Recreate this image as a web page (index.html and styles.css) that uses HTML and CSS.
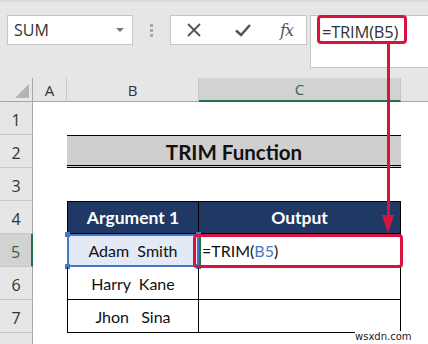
FILE: index.html
```html
<!DOCTYPE html>
<html>
<head>
<meta charset="utf-8">
<link rel="stylesheet" href="styles.css">
</head>
<body>
<div class="app">
  <div class="toolbar">
    <div class="namebox"><span>SUM</span><span class="caret"></span></div>
    <div class="dots"><i></i><i></i><i></i></div>
    <div class="fbtns">
      <svg class="ic-x" width="16" height="16" viewBox="0 0 16 16"><path d="M2 2L14 14M14 2L2 14" stroke="#555" stroke-width="1.8" fill="none"/></svg>
      <svg class="ic-ok" width="18" height="16" viewBox="0 0 18 16"><path d="M2 8.5L7 13L16 3" stroke="#555" stroke-width="2.6" fill="none"/></svg>
      <span class="fx">fx</span>
    </div>
    <div class="fbar"><span class="ftext">=TRIM(B5)</span></div>
  </div>
  <div class="sheet">
    <div class="corner"><span class="tri"></span></div>
    <div class="ch">A</div>
    <div class="ch">B</div>
    <div class="ch sel">C</div>
    <div class="ch rest"></div>

    <div class="rh">1</div><div class="c"></div><div class="c"></div><div class="c"></div><div class="c"></div>
    <div class="rh">2</div><div class="c"></div><div class="title">TRIM Function</div><div class="c"></div>
    <div class="rh">3</div><div class="c"></div><div class="c"></div><div class="c"></div><div class="c"></div>
    <div class="rh">4</div><div class="c"></div><div class="th tb">Argument 1</div><div class="th tc">Output</div><div class="c"></div>
    <div class="rh rsel">5</div><div class="c"></div><div class="td tb bsel">Adam&nbsp; Smith<i class="h h1"></i><i class="h h2"></i><i class="h h3"></i><i class="h h4"></i></div><div class="td tc active">=TRIM(<span class="ref">B5</span>)</div><div class="c"></div>
    <div class="rh">6</div><div class="c"></div><div class="td tb">Harry&nbsp; Kane</div><div class="td tc"></div><div class="c"></div>
    <div class="rh">7</div><div class="c"></div><div class="td tb">Jhon&nbsp;&nbsp; Sina</div><div class="td tc"></div><div class="c"></div>
    <div class="rh last"></div><div class="c"></div><div class="c"></div><div class="c"></div><div class="c"></div>
  </div>
  <div class="redbox top"></div>
  <div class="redbox cell"></div>
  <div class="arrow"><span class="shaft"></span><span class="head"></span></div>
  <div class="wm">wsxdn.com</div>
</div>
</body>
</html>
```
FILE: styles.css
```css
* { box-sizing: border-box; }
html, body { margin: 0; padding: 0; }
body { width: 428px; height: 344px; overflow: hidden; background: #fff; font-family: "Open Sans", "Noto Sans", sans-serif; }
.app { position: relative; width: 428px; height: 344px; background: #e6e6e6; }

.toolbar { display: flex; align-items: flex-start; height: 78px; padding-top: 13px; border-top: 2px solid #dadada; }
.namebox { margin-left: 7px; width: 126px; height: 30px; background: #fff; border: 1px solid #c6c6c6; display: flex; align-items: center; justify-content: space-between; padding: 0 8px 0 6px; font-size: 16px; color: #333; }
.caret { width: 0; height: 0; border-left: 4px solid transparent; border-right: 4px solid transparent; border-top: 4px solid #777; }
.dots { width: 37px; height: 30px; display: flex; flex-direction: column; align-items: center; justify-content: center; gap: 2px; }
.dots i { display: block; width: 3px; height: 3px; background: #a8a8a8; }
.fbtns { width: 137px; height: 30px; background: #fff; border: 1px solid #c6c6c6; display: flex; align-items: center; padding-left: 15px; }
.ic-x { margin-right: 32px; }
.ic-ok { margin-right: 28px; }
.fx { font-family: "DejaVu Serif", "Liberation Serif", serif; font-style: italic; font-size: 16px; color: #555; letter-spacing: -1px; }
.fbar { margin-left: 3px; flex: 1; height: 53px; background: #fff; border: 1px solid #c6c6c6; border-right: none; padding: 4px 0 0 11px; }
.ftext { font-size: 16.5px; color: #333; letter-spacing: -0.2px; }

.sheet { display: grid; grid-template-columns: 33px 34px 132px 202px 27px; grid-template-rows: 24px repeat(7, 33px) 11px; background: #fff; font-family: "Lato", "Open Sans", sans-serif; }
.corner { background: #e6e6e6; border-right: 1px solid #a6a6a6; border-bottom: 1px solid #a6a6a6; position: relative; }
.tri { position: absolute; right: 3px; bottom: 3px; width: 0; height: 0; border-left: 14px solid transparent; border-bottom: 14px solid #b4b4b4; }
.ch { background: #e6e6e6; border-right: 1px solid #c8c8c8; border-bottom: 1px solid #a6a6a6; display: flex; align-items: center; justify-content: center; font-family: "Open Sans", sans-serif; font-size: 15px; color: #333; }
.ch.sel { background: #d2d2d2; border-bottom: 2px solid #217346; color: #3a5e4b; }
.ch.rest { border-right: none; }
.rh { background: #e6e6e6; border-right: 1px solid #a6a6a6; border-bottom: 1px solid #c8c8c8; display: flex; align-items: center; justify-content: center; font-family: "Open Sans", sans-serif; font-size: 16px; color: #333; padding-top: 4px; }
.rh.rsel { background: #d2d2d2; border-right: 2px solid #217346; color: #3a5e4b; }
.rh.last { border-bottom: none; }
.c { background: #fff; }

.title { grid-column: span 2; background: #d0cece; border-top: 1px solid #000; border-bottom: 3px double #000; display: flex; align-items: center; justify-content: center; font-weight: 700; font-size: 20.5px; color: #111; padding-top: 2px; }
.th { background: #203864; color: #fff; font-weight: 700; font-size: 17.5px; display: flex; align-items: center; justify-content: center; border-top: 1px solid #000; border-bottom: 1px solid #000; }
.td { border-bottom: 1px solid #000; display: flex; align-items: center; justify-content: center; font-size: 16px; color: #111; position: relative; }
.tb { border-left: 1px solid #000; border-right: 1px solid #000; }
.tc { border-right: 1px solid #000; }
.th.tc { border-left: none; }

.bsel { background: #e3eaf6; border: 2px solid #4a76c6; }
.h { position: absolute; width: 5px; height: 5px; background: #4a76c6; }
.h1 { left: -4px; top: -4px; }
.h2 { right: -4px; top: -4px; }
.h3 { left: -4px; bottom: -4px; }
.h4 { right: -4px; bottom: -4px; }
.active { justify-content: flex-start; padding-left: 1px; border-left: 2px solid #217346; font-size: 16px; color: #111; }
.ref { color: #4a76c6; }

.redbox { position: absolute; border: 3px solid #d8133e; border-radius: 4px; }
.redbox.top { left: 317px; top: 15px; width: 90px; height: 29px; }
.redbox.cell { left: 193px; top: 234px; width: 210px; height: 34px; }
.arrow { position: absolute; left: 382px; top: 43px; width: 13px; height: 190px; }
.shaft { position: absolute; left: 5px; top: 0; width: 3px; height: 175px; background: #d8133e; }
.head { position: absolute; left: 0; bottom: 0; width: 0; height: 0; border-left: 6.5px solid transparent; border-right: 6.5px solid transparent; border-top: 18px solid #d8133e; }
.wm { position: absolute; left: 355px; top: 331px; font-family: "DejaVu Sans", sans-serif; font-size: 10px; color: #222; background: #fff; line-height: 12px; }
```
